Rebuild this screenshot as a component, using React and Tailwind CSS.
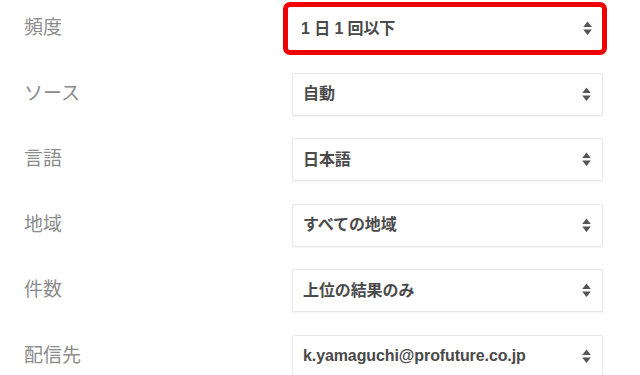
import React from 'react';

const rows = [
  { label: '頻度', value: '1 日 1 回以下', active: true },
  { label: 'ソース', value: '自動' },
  { label: '言語', value: '日本語' },
  { label: '地域', value: 'すべての地域' },
  { label: '件数', value: '上位の結果のみ' },
  { label: '配信先', value: 'k.yamaguchi@profuture.co.jp' },
];

const SortIcon = () => (
  <svg width="9" height="15" viewBox="0 0 9 15" className="shrink-0">
    <path d="M4.5 0.5 L8.8 6 L0.2 6 Z" fill="#555555" />
    <path d="M0.2 8.5 L8.8 8.5 L4.5 14 Z" fill="#555555" />
  </svg>
);

const SelectBox = ({ value, active }) => (
  <div
    className={
      active
        ? 'ml-[-4px] w-[314px] h-[43px] flex items-center justify-between pl-[13px] pr-[10px] bg-white rounded-[2px] outline-[5px] outline-solid outline-[#f00000] outline-offset-0'
        : 'w-[311px] h-[43px] flex items-center justify-between pl-[10px] pr-[11px] bg-white border border-[#e6e6e6] rounded-[2px] shadow-[0_1px_1px_rgba(0,0,0,0.04)]'
    }
  >
    <span className="text-[16px] font-bold text-[#4a4a4a] tracking-[-0.1px]">{value}</span>
    <SortIcon />
  </div>
);

const App = () => {
  return (
    <div
      className="w-[640px] h-[375px] overflow-hidden bg-white"
      style={{ fontFamily: '"Liberation Sans", "Noto Sans CJK JP", sans-serif' }}
    >
      <div className="flex flex-col gap-[22.5px] pt-[7px] pl-[24px]">
        {rows.map((row) => (
          <div key={row.label} className="flex items-center h-[43px]">
            <div className="w-[268px] text-[19px] text-[#8c8c8c]">{row.label}</div>
            <SelectBox value={row.value} active={row.active} />
          </div>
        ))}
      </div>
    </div>
  );
};

export default App;
